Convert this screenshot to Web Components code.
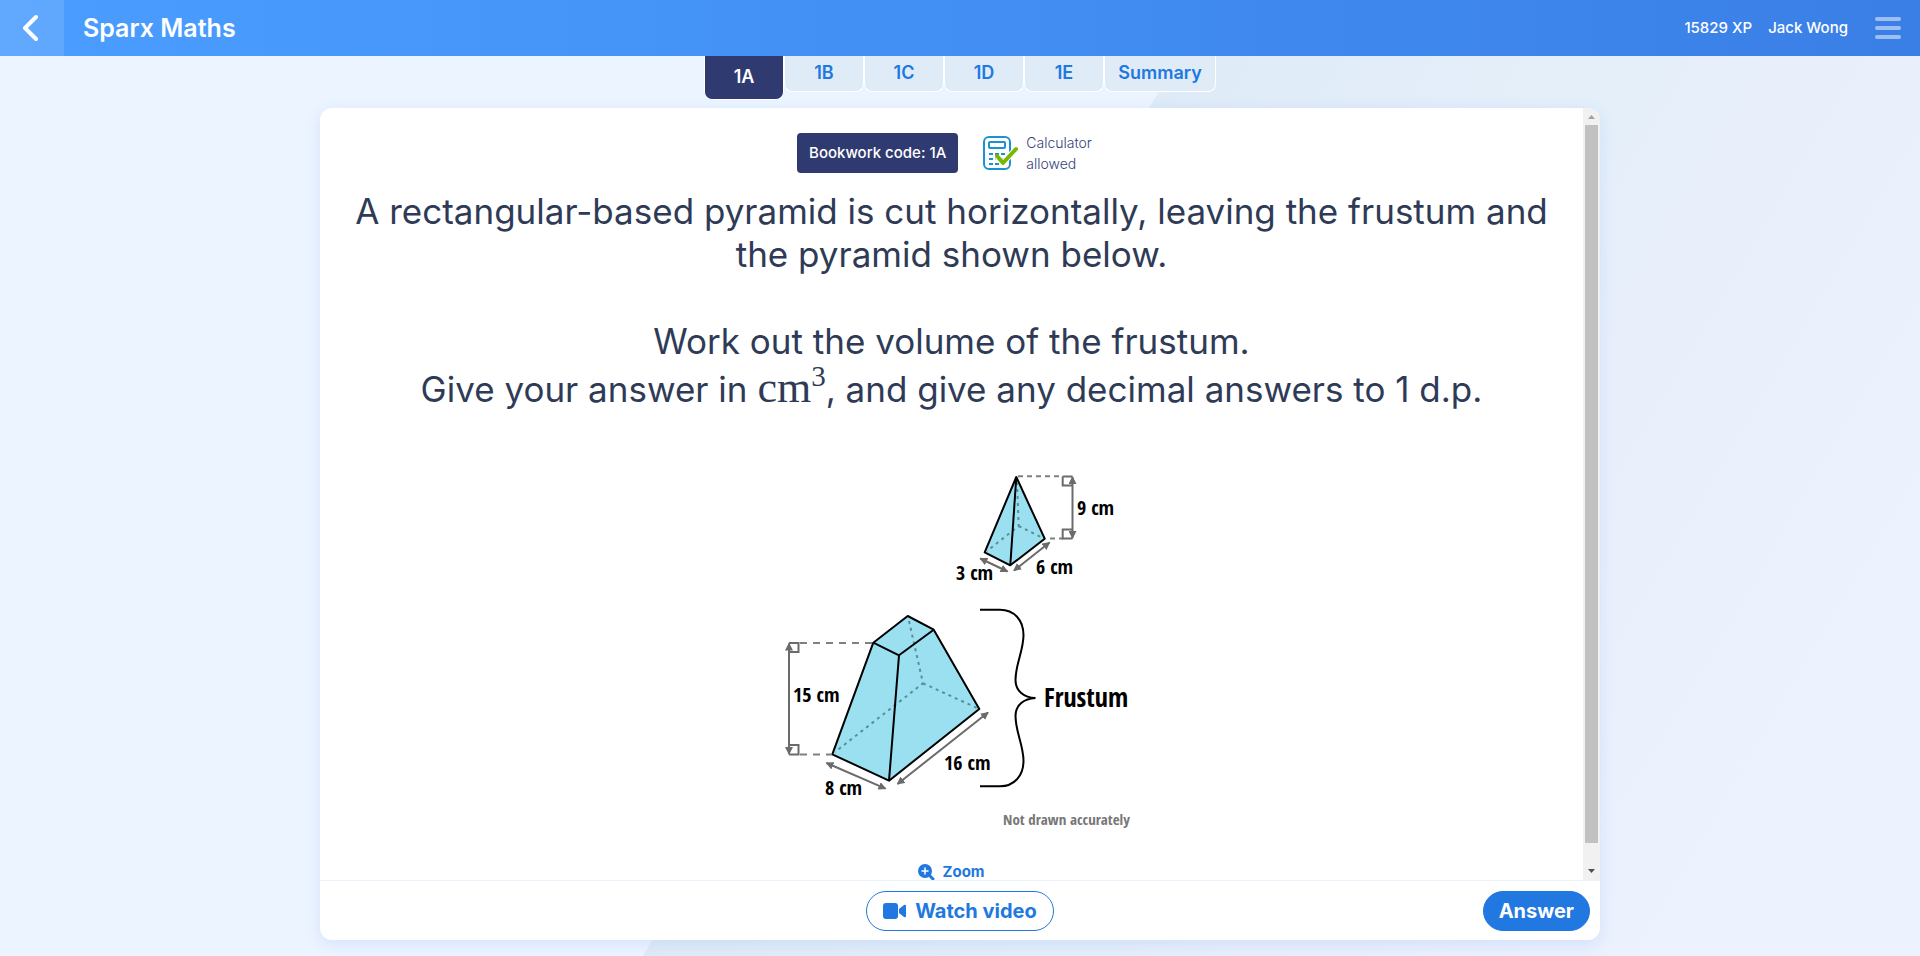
<!DOCTYPE html>
<html lang="en">
<head>
<meta charset="utf-8">
<meta name="viewport" content="width=device-width, initial-scale=1">
<title>Sparx Maths</title>
<style>
  body { margin: 0; font-family: Inter, "Open Sans", sans-serif; color: #2f3b56; }
</style>
</head>
<body>
<maths-app></maths-app>

<template id="t-app">
  <style>
    :host { display: flex; flex-direction: column; height: 100vh; position: relative; isolation: isolate; background: #ecf4ff; overflow: hidden; }
    .backdrop { position: absolute; inset: 0; width: 100%; height: 100%; z-index: -1; }
    main { flex: 1; min-height: 0; display: flex; flex-direction: column; width: min(1280px, 100% - 32px); margin: 0 auto; padding-bottom: 16px; }
    question-card { flex: 1; min-height: 0; }
  </style>
  <svg class="backdrop" viewBox="0 0 1920 956" preserveAspectRatio="none" aria-hidden="true">
    <defs>
      <linearGradient id="sheen" gradientUnits="userSpaceOnUse" x1="900" y1="400" x2="1740" y2="900">
        <stop offset="0" stop-color="#deeaf6"/><stop offset=".45" stop-color="#e4effa"/>
        <stop offset=".6" stop-color="#e8effb"/><stop offset="1" stop-color="#ecf2fe"/>
      </linearGradient>
    </defs>
    <path d="M1180 56H1920V956H643Z" fill="url(#sheen)"/>
  </svg>
  <app-header xp="15829 XP" user="Jack Wong">Sparx Maths</app-header>
  <main>
    <task-tabs>
      <task-tab active>1A</task-tab><task-tab>1B</task-tab><task-tab>1C</task-tab><task-tab>1D</task-tab><task-tab>1E</task-tab><task-tab wide>Summary</task-tab>
    </task-tabs>
    <question-card>
      <question-info code="1A"></question-info>
      <question-text></question-text>
      <solid-figure></solid-figure>
      <zoom-button>Zoom</zoom-button>
      <pill-button slot="centre" outline>
        <svg slot="icon" width="24" height="18" viewBox="0 0 24 18" aria-hidden="true"><rect x="0" y="1" width="15" height="16" rx="3" fill="currentColor"/><path d="M16 7L21 3Q23 2 23 4V14Q23 16 21 15L16 11Z" fill="currentColor"/></svg>
        Watch video
      </pill-button>
      <pill-button slot="end">Answer</pill-button>
    </question-card>
  </main>
</template>

<template id="t-header">
  <style>
    :host { display: block; color: #fff; }
    header { display: flex; align-items: center; height: 56px; background: linear-gradient(90deg, #4a9eff, #3a7fe6); }
    button { border: 0; padding: 0; color: inherit; background: none; display: grid; place-items: center; cursor: pointer; }
    .back { width: 64px; height: 56px; background: rgba(255,255,255,.12); }
    h1 { margin: 0 auto 0 19px; font-size: 25px; line-height: 32px; font-weight: 600; }
    .who { display: flex; gap: 16px; font-size: 15px; line-height: 20px; font-weight: 500; }
    .menu { margin: 0 19px 0 27px; opacity: .5; }
  </style>
  <header>
    <button class="back" aria-label="Back"><svg width="18" height="28" viewBox="0 0 18 28" fill="none" stroke="currentColor" stroke-width="4" stroke-linecap="round" stroke-linejoin="round"><path d="M13 3L2 14L13 25"/></svg></button>
    <h1><slot></slot></h1>
    <div class="who"><span id="xp"></span><span id="user"></span></div>
    <button class="menu" aria-label="Menu"><svg width="26" height="22" viewBox="0 0 26 22" fill="currentColor"><rect width="26" height="4" rx="2"/><rect y="9" width="26" height="4" rx="2"/><rect y="18" width="26" height="4" rx="2"/></svg></button>
  </header>
</template>

<template id="t-tabs">
  <style>
    :host { display: block; height: 52px; }
    nav { display: flex; justify-content: center; align-items: flex-start; }
  </style>
  <nav aria-label="Questions"><slot></slot></nav>
</template>

<template id="t-tab">
  <style>
    :host { display: block; }
    a { box-sizing: border-box; display: block; width: 80px; height: 36px; border: 1px solid #fff; border-top: 0; border-radius: 0 0 8px 8px; background: #dfebf7; color: #2078e0; text-align: center; text-decoration: none; font-size: 18px; line-height: 34px; font-weight: 600; }
    :host([wide]) a { width: 112px; }
    :host([active]) a { height: 44px; line-height: 42px; background: #2f3a70; color: #fff; }
  </style>
  <a href="#"><slot></slot></a>
</template>

<template id="t-card">
  <style>
    :host { display: flex; flex-direction: column; background: #fff; border-radius: 12px; overflow: hidden; box-shadow: 0 4px 16px rgba(120,160,235,.2); }
    .view { flex: 1; min-height: 0; display: flex; }
    .scroll { flex: 1; min-width: 0; overflow-y: auto; scrollbar-width: none; padding: 24px 24px 0; box-sizing: border-box; }
    .bar { width: 17px; display: flex; flex-direction: column; background: #f1f1f1; }
    .bar svg { display: block; flex: none; }
    .track { flex: 1; padding: 0 2px; }
    .thumb { height: calc(100% - 20px); background: #c1c1c1; }
    footer { display: grid; grid-template-columns: 1fr auto 1fr; align-items: center; height: 60px; box-sizing: border-box; border-top: 1px solid #ecf3ff; padding: 0 10px; }
    .end { justify-self: end; }
  </style>
  <div class="view">
    <div class="scroll"><slot></slot></div>
    <div class="bar" aria-hidden="true">
      <svg width="17" height="17"><path d="M5 11H12L8.500 7Z" fill="#a3a3a3"/></svg>
      <div class="track"><div class="thumb"></div></div>
      <svg width="17" height="17"><path d="M5 6H12L8.500 10Z" fill="#505050"/></svg>
    </div>
  </div>
  <footer><span></span><slot name="centre"></slot><div class="end"><slot name="end"></slot></div></footer>
</template>

<template id="t-info">
  <style>
    :host { display: flex; justify-content: center; align-items: center; gap: 25px; }
    .code { background: #2f3a70; color: #fff; border-radius: 4px; padding: 0 12px; font-size: 15px; line-height: 40px; font-weight: 500; }
    .calc { display: flex; align-items: center; gap: 7px; padding-right: 14px; font-size: 14px; line-height: 21px; font-weight: 300; color: #35427a; }
  </style>
  <div class="code">Bookwork code: <span id="code"></span></div>
  <div class="calc">
    <svg width="36" height="36" viewBox="0 0 36 36" fill="none" aria-hidden="true">
      <rect x="1" y="2" width="26" height="32" rx="5" stroke="#1b92d2" stroke-width="2"/>
      <rect x="6" y="7" width="16" height="6" rx="1" stroke="#1b92d2" stroke-width="2"/>
      <path d="M6 19H10M12 19H16M18 19H22M6 24H10M12 24H16M18 24H22M6 29H10M12 29H16M18 29H22" stroke="#1b92d2" stroke-width="2"/>
      <path d="M14 22L20 28L34 13" stroke="#fff" stroke-width="6"/>
      <path d="M14 21L20 28L33 14" stroke="#7ab800" stroke-width="4" stroke-linecap="round" stroke-linejoin="round"/>
    </svg>
    <span>Calculator<br>allowed</span>
  </div>
</template>

<template id="t-text">
  <style>
    :host { display: block; margin-top: 16px; text-align: center; font-size: 35px; line-height: 43px; }
    p { margin: 0 0 44px; }
    .units { display: block; margin-top: 5px; }
    .math { font-family: "Liberation Serif", serif; font-size: 44px; line-height: 0; }
    sup { font-size: 29px; line-height: 0; vertical-align: 16px; }
  </style>
  <p>A rectangular-based pyramid is cut horizontally, leaving the frustum and the pyramid shown below.</p>
  <p>Work out the volume of the frustum.<span class="units">Give your answer in <span class="math">cm<sup>3</sup></span>, and give any decimal answers to 1 d.p.</span></p>
</template>

<template id="t-figure">
  <style>
    :host { display: flex; justify-content: center; margin-top: 55px; }
    svg { display: block; font-family: "Open Sans Condensed", "Roboto Condensed", sans-serif; font-weight: 700; font-size: 20px; fill: #000; }
    .face { fill: #9ae0f0; stroke: #000; stroke-width: 2; stroke-linejoin: round; }
    .edge { fill: none; stroke: #000; stroke-width: 2; stroke-linejoin: round; }
    .hid { fill: none; stroke: #5b8c98; stroke-width: 2; stroke-dasharray: 3 4; }
    .dash { fill: none; stroke: #808080; stroke-width: 2; stroke-dasharray: 7 6; }
    .dim { fill: none; stroke: #6b6b6b; stroke-width: 2; }
    .arrow { marker-start: url(#tip); marker-end: url(#tip); }
    .name { font-size: 26px; }
    .note { font-size: 15px; fill: #777; }
  </style>
  <svg width="369" height="382" viewBox="767 466 369 382" role="img" aria-label="A small pyramid above a frustum">
    <defs><marker id="tip" viewBox="0 0 8 8" refX="7" refY="4" markerWidth="8" markerHeight="8" markerUnits="userSpaceOnUse" orient="auto-start-reverse"><path d="M0 0L8 4L0 8Z" fill="#6b6b6b"/></marker></defs>
    <path class="face" d="M1016.300 477L984.700 552.300L1010.300 565.300L1044.700 538.700Z"/>
    <path class="hid" d="M1017 482L1018.700 526L987 551M1018.700 526L1043 538"/>
    <path class="edge" d="M1016.300 477L1010.300 565.300"/>
    <path class="dash" style="stroke-dasharray:5 4" d="M1018 476.300H1063M1050 538.500H1063"/>
    <path class="dim" d="M1062.700 476.500H1072.500M1062.700 476.500V485.500H1072.500M1072.500 538.500H1062.700V529.500H1072.500"/>
    <path class="dim arrow" d="M1072.500 477V538"/>
    <path class="dim arrow" d="M980.300 558.500L1007.500 571.500"/>
    <path class="dim arrow" d="M1014 570.500L1049.500 542.500"/>
    <text x="1077" y="515">9 cm</text><text x="956" y="580">3 cm</text><text x="1036" y="574">6 cm</text>

    <path class="face" d="M873.300 642.700L907.700 616L933.700 629.700L979.300 709L889 780.700L832.300 754.300Z"/>
    <path class="hid" d="M909 621L923 683.300L835 752M923 683.300L977 708"/>
    <path class="edge" d="M873.300 642.700L899 655.300L933.700 629.700M899 655.300L889 780.700"/>
    <path class="dash" d="M800 643H873M800 754.500H832"/>
    <path class="dim" d="M789 643H798.500V652H789M789 745H798.500V754.500H789"/>
    <path class="dim arrow" d="M789 643.500V754"/>
    <path class="dim arrow" d="M826.500 763L885.500 788.700"/>
    <path class="dim arrow" d="M897.500 784L988 712.500"/>
    <text x="793" y="702">15 cm</text><text x="944" y="770">16 cm</text><text x="825" y="795">8 cm</text>

    <path d="M980 609.700H1000C1014 609.700 1023.500 620 1023.500 635C1023.500 651 1015.500 664 1015.500 680C1015.500 691 1024 697.500 1035.500 698C1024 698.500 1015.500 705 1015.500 716C1015.500 732 1023.500 745 1023.500 761C1023.500 776 1014 786.300 1000 786.300H980" fill="none" stroke="#000" stroke-width="2"/>
    <text class="name" x="1044" y="707">Frustum</text>
    <text class="note" x="1003" y="825">Not drawn accurately</text>
  </svg>
</template>

<template id="t-zoom">
  <style>
    :host { display: flex; justify-content: center; margin-top: 14px; }
    button { display: flex; align-items: center; gap: 7px; border: 0; padding: 0; background: none; color: #2078e0; font: 700 15px/20px Inter, sans-serif; cursor: pointer; }
  </style>
  <button><svg width="17" height="17" viewBox="0 0 17 17" aria-hidden="true"><circle cx="7" cy="7" r="7" fill="currentColor"/><path d="M11 11L15 15" stroke="currentColor" stroke-width="3" stroke-linecap="round"/><path d="M7 4V10M4 7H10" stroke="#fff" stroke-width="1.500" stroke-linecap="round"/></svg><slot></slot></button>
</template>

<template id="t-pill">
  <style>
    :host { display: block; }
    button { display: flex; align-items: center; gap: 8px; height: 40px; padding: 0 15px; border: 1px solid #2078e0; border-radius: 20px; background: #2078e0; color: #fff; font: 700 20px/24px Inter, sans-serif; cursor: pointer; white-space: nowrap; }
    :host([outline]) button { background: #fff; color: #2078e0; padding: 0 16px; }
    ::slotted(svg) { display: block; }
  </style>
  <button><slot name="icon"></slot><span><slot></slot></span></button>
</template>

<script>
  const define = (name, templateId, setup) => customElements.define(name, class extends HTMLElement {
    constructor() {
      super();
      this.attachShadow({ mode: 'open' }).append(document.getElementById(templateId).content.cloneNode(true));
    }
    connectedCallback() { if (setup) setup(this, this.shadowRoot); }
  });
  define('app-header', 't-header', (host, root) => {
    root.getElementById('xp').textContent = host.getAttribute('xp');
    root.getElementById('user').textContent = host.getAttribute('user');
  });
  define('task-tabs', 't-tabs');
  define('task-tab', 't-tab', (host, root) => {
    if (host.hasAttribute('active')) root.querySelector('a').setAttribute('aria-current', 'page');
  });
  define('question-card', 't-card');
  define('question-info', 't-info', (host, root) => {
    root.getElementById('code').textContent = host.getAttribute('code');
  });
  define('question-text', 't-text');
  define('solid-figure', 't-figure');
  define('zoom-button', 't-zoom');
  define('pill-button', 't-pill');
  define('maths-app', 't-app');
</script>
</body>
</html>
